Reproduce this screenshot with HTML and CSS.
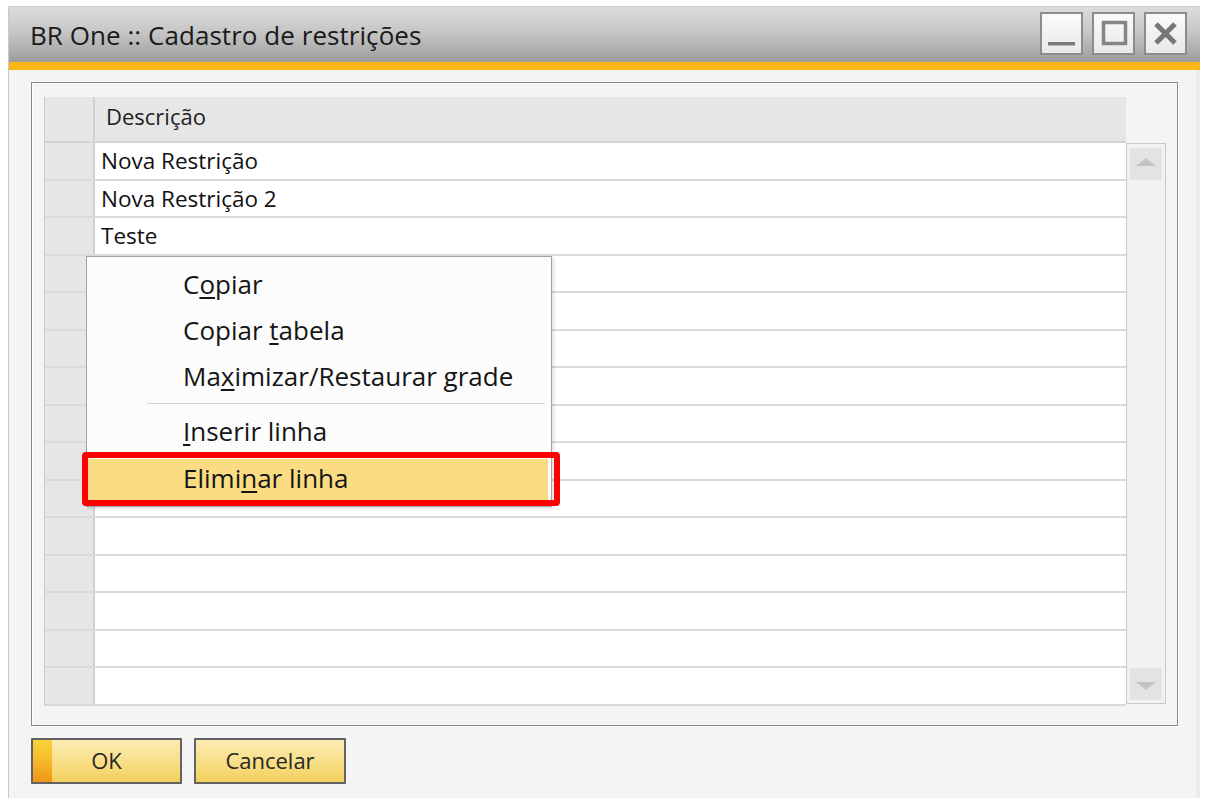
FILE: index.html
```html
<!DOCTYPE html>
<html lang="pt-BR">
<head>
<meta charset="utf-8">
<title>BR One :: Cadastro de restrições</title>
<link rel="stylesheet" href="styles.css">
</head>
<body>
<div class="window">
  <div class="titlebar">
    <div class="title">BR One :: Cadastro de restrições</div>
    <div class="wbtns">
      <div class="wbtn"><svg width="39" height="39" viewBox="0 0 39 39"><rect x="6" y="28" width="27" height="3.5" fill="#7a7a7a"/></svg></div>
      <div class="wbtn"><svg width="39" height="39" viewBox="0 0 39 39"><rect x="9.5" y="8.5" width="22" height="21" fill="none" stroke="#858585" stroke-width="3.5"/></svg></div>
      <div class="wbtn"><svg width="39" height="39" viewBox="0 0 39 39"><path d="M10 10 L29 29 M29 10 L10 29" stroke="#777" stroke-width="5" fill="none"/></svg></div>
    </div>
  </div>
  <div class="stripe"></div>
  <div class="content">
    <div class="groupbox">
      <div class="grid">
        <div class="table">
          <div class="hdr"><div class="rh"></div><div class="hc">Descrição</div></div>
          <div class="row"><div class="rh"></div><div class="cell">Nova Restrição</div></div>
          <div class="row"><div class="rh"></div><div class="cell">Nova Restrição 2</div></div>
          <div class="row"><div class="rh"></div><div class="cell">Teste</div></div>
          <div class="row"><div class="rh"></div><div class="cell"></div></div>
          <div class="row"><div class="rh"></div><div class="cell"></div></div>
          <div class="row"><div class="rh"></div><div class="cell"></div></div>
          <div class="row"><div class="rh"></div><div class="cell"></div></div>
          <div class="row"><div class="rh"></div><div class="cell"></div></div>
          <div class="row"><div class="rh"></div><div class="cell"></div></div>
          <div class="row"><div class="rh"></div><div class="cell"></div></div>
          <div class="row"><div class="rh"></div><div class="cell"></div></div>
          <div class="row"><div class="rh"></div><div class="cell"></div></div>
          <div class="row"><div class="rh"></div><div class="cell"></div></div>
          <div class="row"><div class="rh"></div><div class="cell"></div></div>
          <div class="row"><div class="rh"></div><div class="cell"></div></div>
        </div>
        <div class="vscroll">
          <div class="sbtn"><svg width="32" height="32" viewBox="0 0 32 32"><polygon points="6,18 26,18 16,10" fill="#c3c3c3"/></svg></div>
          <div class="sbtn"><svg width="32" height="32" viewBox="0 0 32 32"><polygon points="6,14 26,14 16,22" fill="#c3c3c3"/></svg></div>
        </div>
      </div>
    </div>
    <div class="actions">
      <button class="btn btn-ok">OK</button>
      <button class="btn btn-cancel">Cancelar</button>
    </div>
  </div>
</div>

<div class="ctxmenu">
  <div class="mi">C<u>o</u>piar</div>
  <div class="mi">Copiar <u>t</u>abela</div>
  <div class="mi">Ma<u>x</u>imizar/Restaurar grade</div>
  <div class="sep"></div>
  <div class="mi"><u>I</u>nserir linha</div>
  <div class="mi hl">Elimi<u>n</u>ar linha</div>
</div>
<div class="annot"></div>
</body>
</html>
```

FILE: styles.css
```css
html, body {
  margin: 0;
  padding: 0;
}
body {
  width: 1205px;
  height: 798px;
  overflow: hidden;
  background: #ffffff;
  font-family: "Open Sans", "Noto Sans", sans-serif;
  color: #141414;
  position: relative;
}
.window {
  margin: 6px 0 0 8px;
  width: 1192px;
  height: 792px;
  box-sizing: border-box;
  border-left: 1px solid #c9c9c9;
  border-top: 1px solid #cfcfcf;
  display: flex;
  flex-direction: column;
}
.titlebar {
  height: 55px;
  display: flex;
  align-items: center;
  padding-left: 21px;
  padding-right: 13px;
  background: linear-gradient(to bottom, #dcdcdc 0%, #c6c6c6 45%, #9d9d9d 100%);
}
.title {
  font-size: 26px;
  color: #1a1a1a;
  letter-spacing: 0.05px;
}
.wbtns {
  margin-left: auto;
  align-self: flex-start;
  margin-top: 5px;
  display: flex;
  gap: 9px;
}
.wbtn {
  width: 43px;
  height: 43px;
  box-sizing: border-box;
  border: 2px solid #8c8c8c;
  background: linear-gradient(to bottom, #fbfbfb, #e8e8e8);
  display: flex;
}
.stripe {
  height: 8px;
  background: #fbb714;
}
.content {
  flex: 1;
  background: #f4f4f4;
  padding: 12px 0 0 22px;
  border-right: 4px solid #ececec;
}
.groupbox {
  width: 1147px;
  height: 644px;
  box-sizing: border-box;
  border: 1px solid #8a8a8a;
  box-shadow: inset 1px 1px 0 #ffffff, 1px 1px 0 #ffffff;
  padding: 14px 0 0 12px;
}
.grid {
  display: flex;
}
.table {
  width: 1082px;
  box-sizing: border-box;
  border-left: 1px solid #cbcbcb;
}
.hdr {
  height: 46px;
  box-sizing: border-box;
  display: flex;
  background: #e6e6e6;
  border-bottom: 2px solid #d4d4d4;
}
.rh {
  width: 50px;
  box-sizing: border-box;
  background: #e6e6e6;
  border-right: 2px solid #d0d0d0;
}
.hc {
  flex: 1;
  padding-left: 11px;
  font-size: 22px;
  line-height: 38px;
  color: #1e1e1e;
}
.row {
  height: 37.5px;
  box-sizing: border-box;
  display: flex;
  border-bottom: 2px solid #dadada;
}
.cell {
  flex: 1;
  background: #ffffff;
  padding-left: 6px;
  font-size: 22.5px;
  line-height: 35px;
  color: #111;
}
.vscroll {
  width: 40px;
  height: 561px;
  margin-top: 46px;
  box-sizing: border-box;
  border: 1px solid #c8c8c8;
  background: #f2f2f2;
  padding: 4px 3px 3px 3px;
  display: flex;
  flex-direction: column;
  justify-content: space-between;
}
.sbtn {
  width: 32px;
  height: 32px;
  background: #e3e3e3;
  display: flex;
}
.actions {
  margin-top: 12px;
  display: flex;
  gap: 12px;
}
.btn {
  width: 151px;
  height: 46px;
  box-sizing: border-box;
  border: 2px solid #626262;
  border-radius: 1px;
  background: linear-gradient(to bottom, #fcecb4 0%, #f8df8a 50%, #f3cf5c 100%);
  font-family: "Open Sans", "Noto Sans", sans-serif;
  font-size: 22px;
  line-height: 38px;
  color: #262626;
  padding: 0 0 2px 0;
  margin: 0;
}
.btn-ok {
  background:
    linear-gradient(to bottom, #f9d33a 0%, #f6b62a 55%, #ef9418 100%) left top / 19px 100% no-repeat,
    linear-gradient(to bottom, #fcecb4 0%, #f8df8a 50%, #f3cf5c 100%);
}
.btn-cancel {
  width: 152px;
}
.ctxmenu {
  position: absolute;
  left: 86px;
  top: 256px;
  width: 466px;
  box-sizing: border-box;
  border: 1px solid #a2a2a2;
  background: #fcfcfc;
  padding: 5px 0;
  box-shadow: 2px 2px 3px rgba(0, 0, 0, 0.12);
}
.mi {
  height: 46px;
  line-height: 44px;
  padding-left: 96px;
  font-size: 26px;
  color: #151515;
  white-space: nowrap;
}
.mi u {
  text-decoration-thickness: 2px;
  text-underline-offset: 3px;
}
.sep {
  height: 1px;
  margin: 3px 6px 4px 60px;
  background: #cdd3db;
  border-bottom: 1px solid #ffffff;
}
.mi.hl {
  height: 41px;
  line-height: 38px;
  margin: 4px 3px 1px 1px;
  padding-left: 95px;
  background: #fbdc83;
}
.annot {
  position: absolute;
  left: 82px;
  top: 452px;
  width: 478px;
  height: 54px;
  box-sizing: border-box;
  border: 6px solid #ff0000;
  border-radius: 4px;
}
```
